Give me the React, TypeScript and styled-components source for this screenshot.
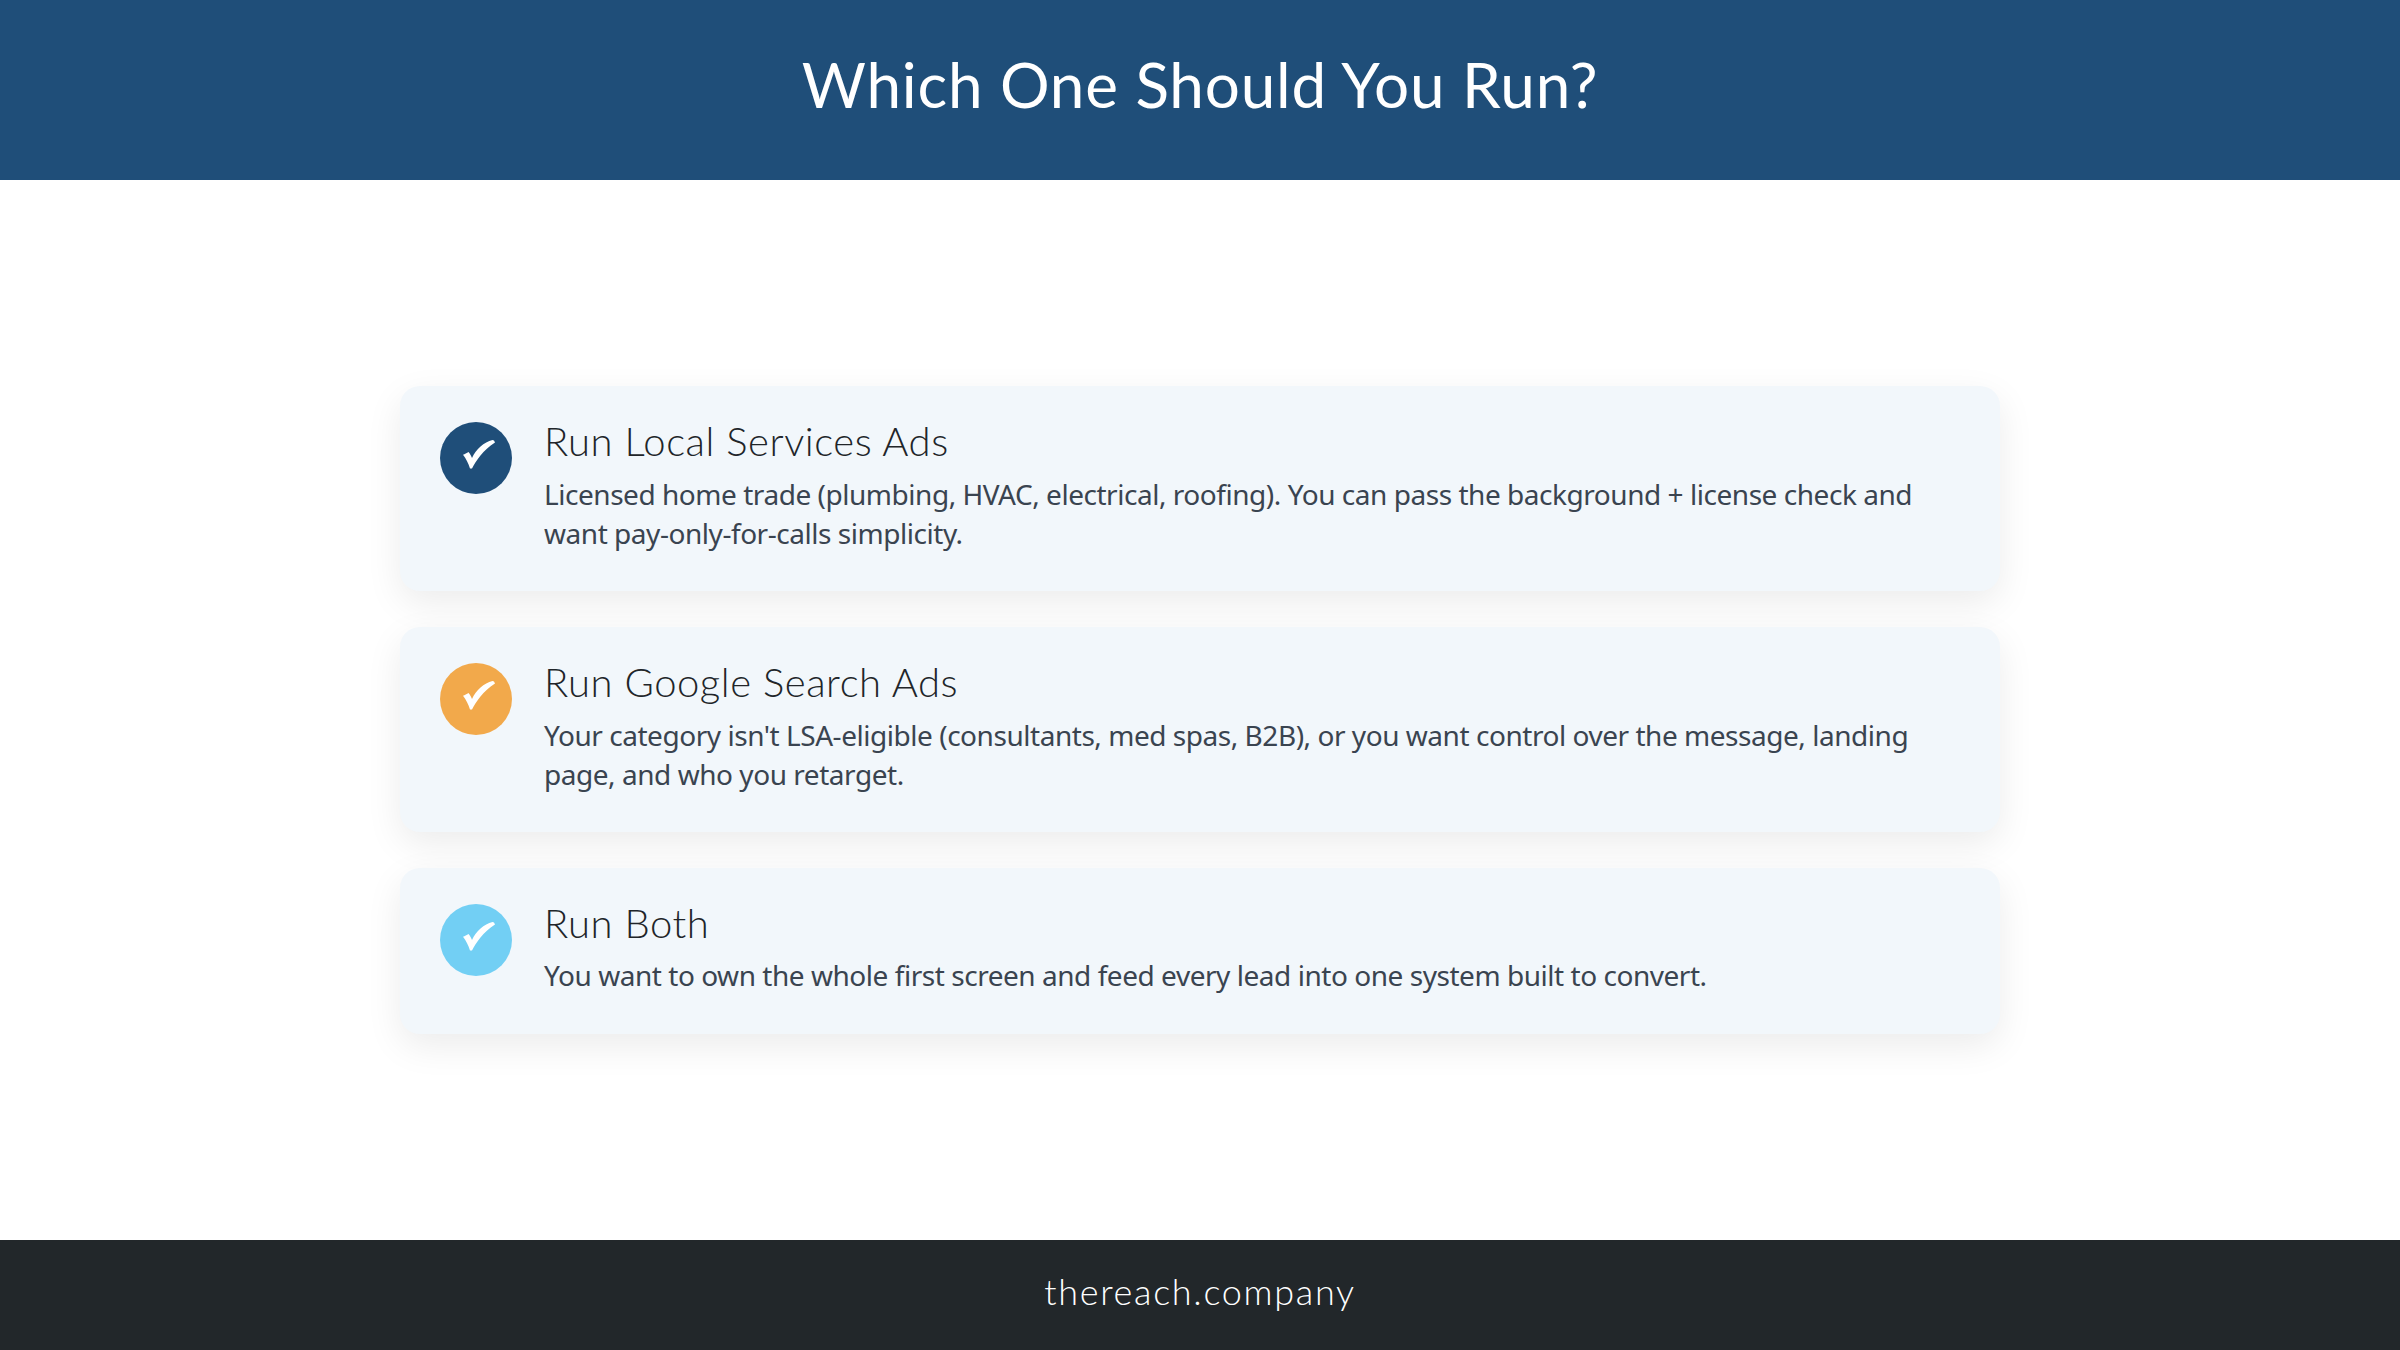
import styled, { createGlobalStyle } from "styled-components";

const GlobalStyle = createGlobalStyle`
	html, body {
		margin: 0;
		padding: 0;
		background: #fff;
	}
	* {
		box-sizing: border-box;
	}
`;

const options = [
	{
		title: "Run Local Services Ads",
		text: "Licensed home trade (plumbing, HVAC, electrical, roofing). You can pass the background + license check and want pay-only-for-calls simplicity.",
		color: "#1f4e79",
	},
	{
		title: "Run Google Search Ads",
		text: "Your category isn't LSA-eligible (consultants, med spas, B2B), or you want control over the message, landing page, and who you retarget.",
		color: "#f2a94b",
	},
	{
		title: "Run Both",
		text: "You want to own the whole first screen and feed every lead into one system built to convert.",
		color: "#72cff4",
	},
];

function CheckMark() {
	return (
		<svg width="32" height="29" viewBox="0 0 32 29" aria-hidden="true">
			<path
				fill="#fff"
				d="M29.5 0C21 2 13 9 9 18 8 15.5 7 13.5 5.5 12 3.8 13.2 1.8 14.2 0 14.7 3 18.5 5.5 23.5 7 28.5L9 28.5C13 21 20 10 32 2.5L31 .5Z"
			/>
		</svg>
	);
}

export default function App() {
	return (
		<Page>
			<GlobalStyle />
			<Header>
				<Title>Which One Should You Run?</Title>
			</Header>
			<Main>
				<Cards>
					{options.map((option) => (
						<Card key={option.title}>
							<Badge $color={option.color}>
								<CheckMark />
							</Badge>
							<Body>
								<CardTitle>{option.title}</CardTitle>
								<CardText>{option.text}</CardText>
							</Body>
						</Card>
					))}
				</Cards>
			</Main>
			<Footer>thereach.company</Footer>
		</Page>
	);
}

const Page = styled.div`
	display: flex;
	flex-direction: column;
	width: 100%;
	height: 1350px;
	overflow: hidden;
`;

const Header = styled.header`
	display: flex;
	justify-content: center;
	height: 180px;
	padding-top: 46px;
	background-color: #1f4e79;
`;

const Title = styled.h1`
	margin: 0;
	font-family: "Lato", sans-serif;
	font-size: 62px;
	font-weight: 400;
	letter-spacing: 0.8px;
	line-height: 76px;
	color: #fff;
`;

const Main = styled.main`
	flex: 1;
	display: flex;
	align-items: center;
	justify-content: center;
`;

const Cards = styled.div`
	display: flex;
	flex-direction: column;
	gap: 36px;
	width: 1600px;
`;

const Card = styled.section`
	display: flex;
	align-items: flex-start;
	gap: 32px;
	padding: 36px 40px 38px;
	border-radius: 20px;
	background-color: #f2f7fb;
	box-shadow: 0 12px 36px rgba(0, 0, 0, 0.08);
`;

const Badge = styled.div<{ $color: string }>`
	flex: none;
	display: flex;
	align-items: center;
	justify-content: center;
	width: 72px;
	height: 72px;
	padding: 0 0 8px 6px;
	border-radius: 50%;
	background-color: ${(p) => p.$color};
`;

const Body = styled.div`
	flex: 1;
`;

const CardTitle = styled.h2`
	margin: 0 0 14px;
	font-family: "Lato", sans-serif;
	font-size: 40px;
	font-weight: 300;
	letter-spacing: 0.55px;
	line-height: 38.4px;
	color: #212529;
`;

const CardText = styled.p`
	margin: 0;
	font-family: "Noto Sans", sans-serif;
	font-size: 28px;
	letter-spacing: -0.46px;
	line-height: 39.2px;
	color: #3a4450;
`;

const Footer = styled.footer`
	display: flex;
	align-items: center;
	justify-content: center;
	height: 110px;
	padding-bottom: 8px;
	background-color: #22272a;
	font-family: "Lato", sans-serif;
	font-size: 36px;
	font-weight: 300;
	letter-spacing: 1.7px;
	color: #fff;
`;
